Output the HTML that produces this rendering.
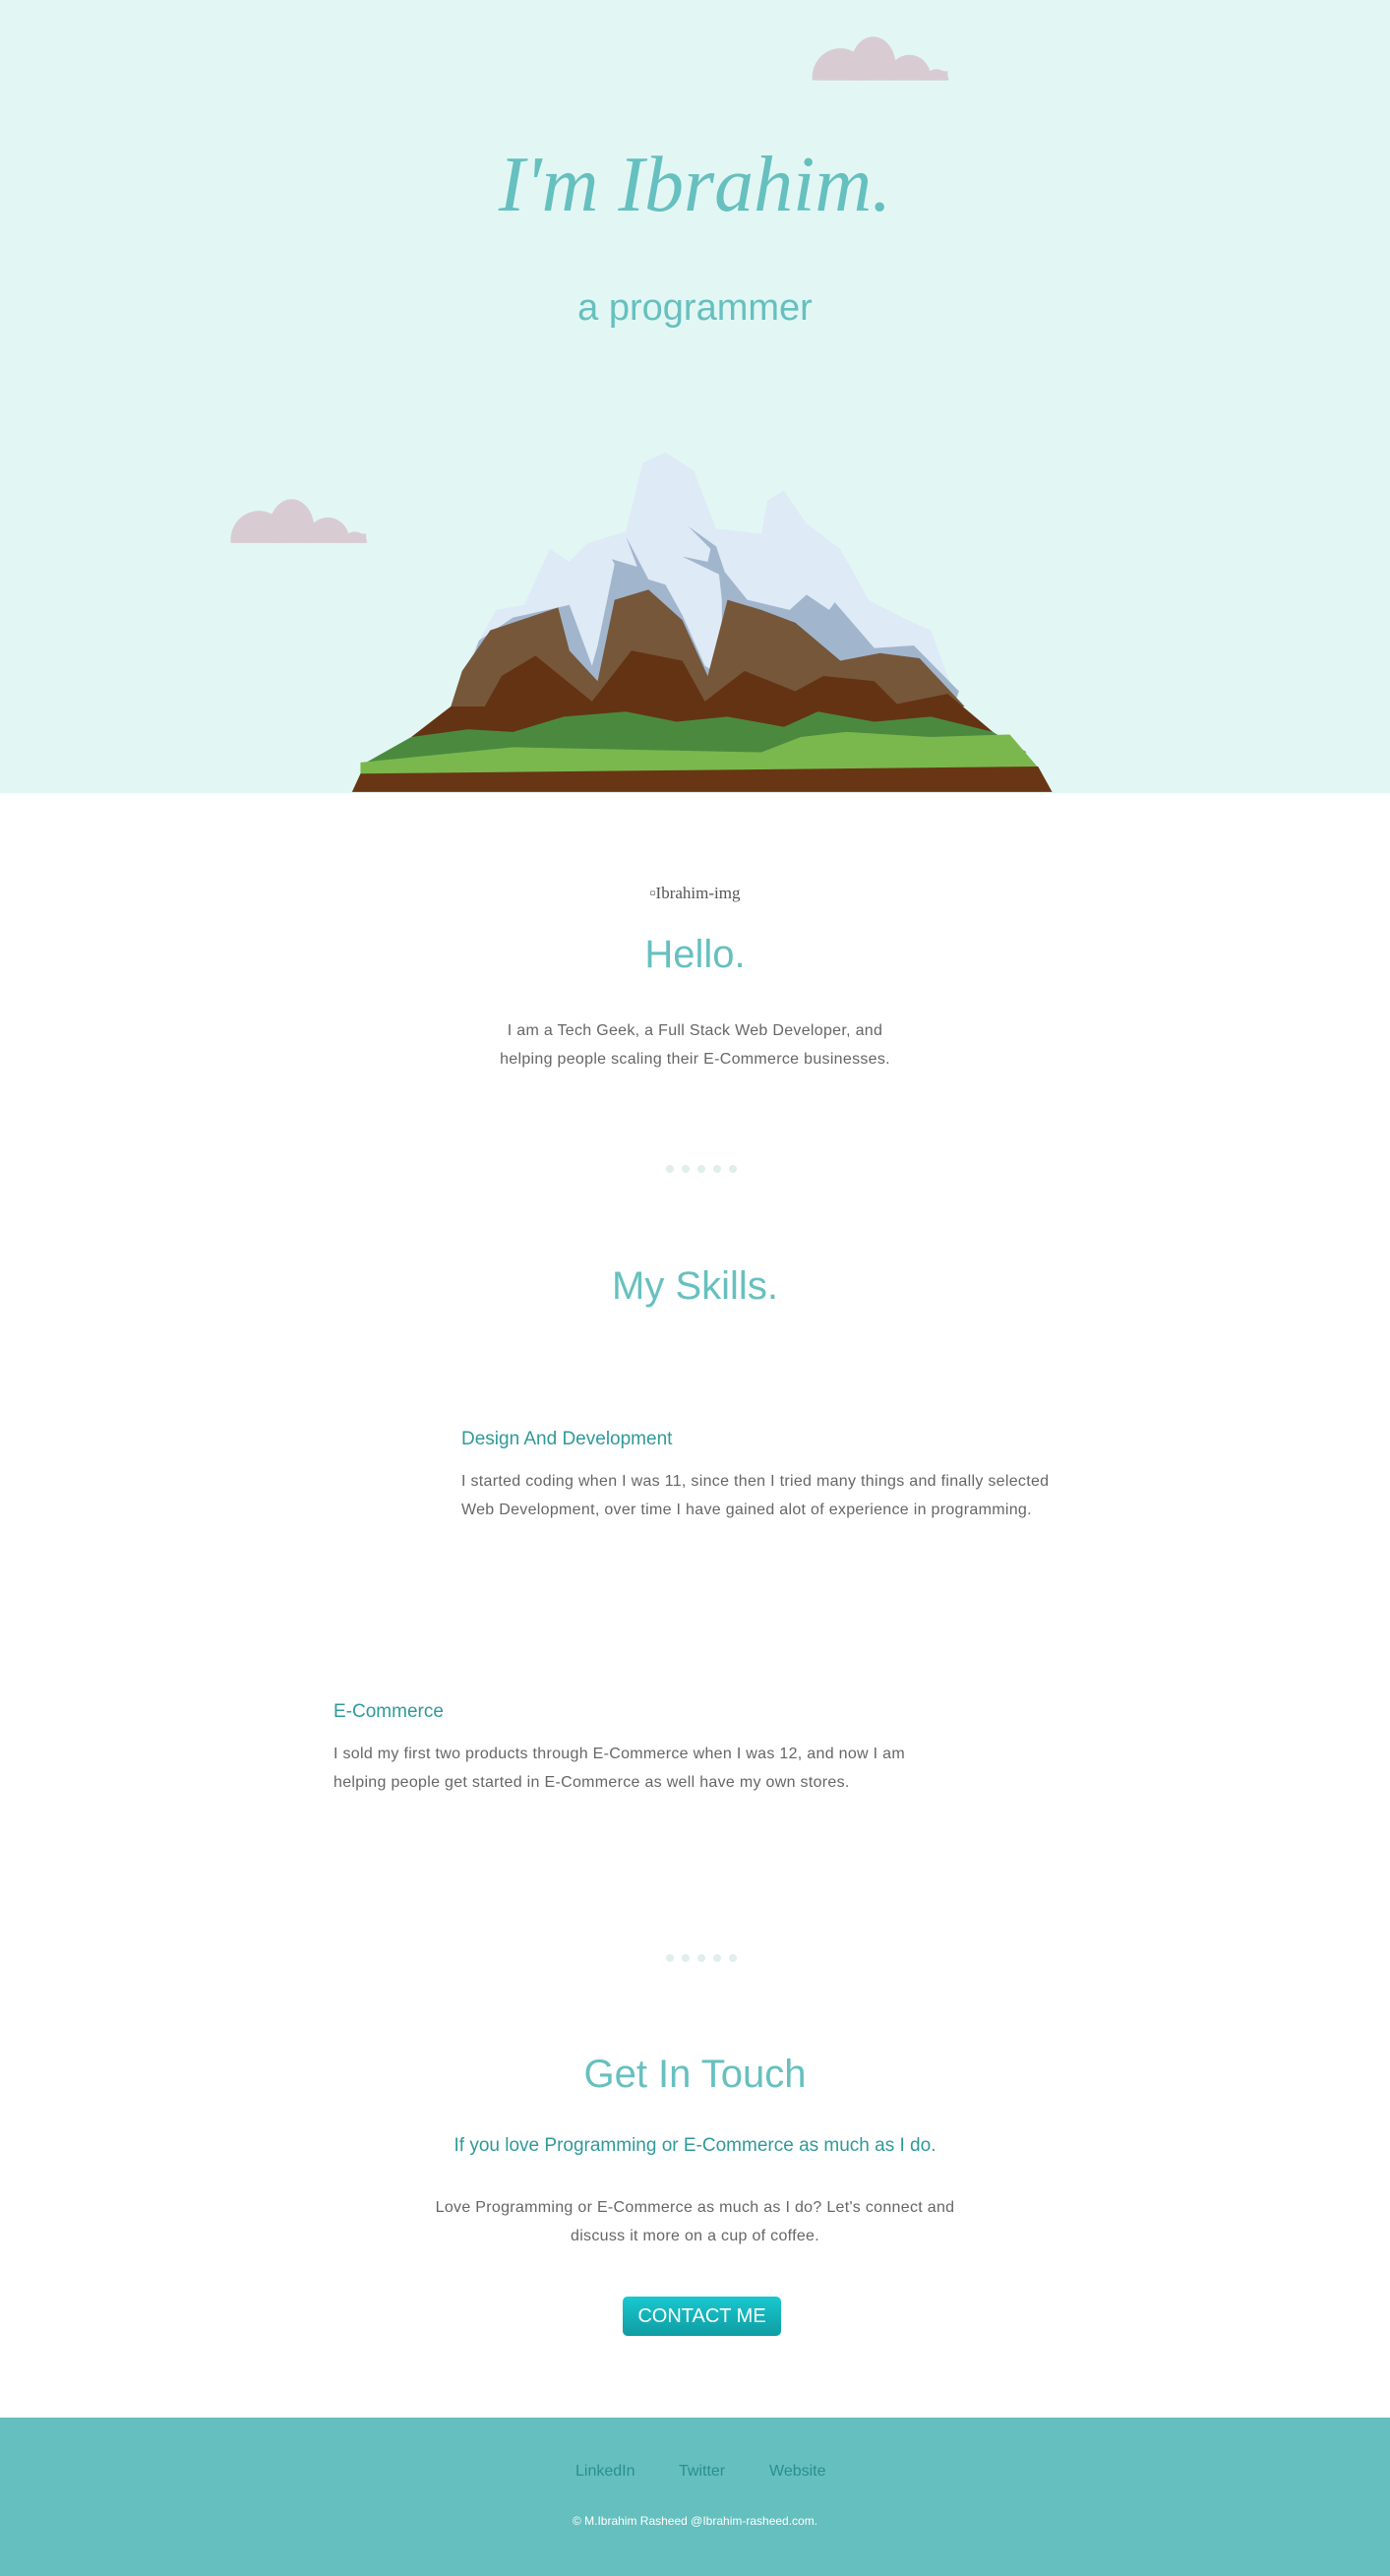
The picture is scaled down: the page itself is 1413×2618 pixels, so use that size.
<!DOCTYPE html>
<html><head><meta charset="utf-8"><style>
*{margin:0;padding:0;box-sizing:border-box}
body{width:1413px;height:2618px;position:relative;background:#fff;font-family:"Liberation Sans",sans-serif;overflow:hidden}
.a{position:absolute;white-space:nowrap}
.c{left:0;width:1413px;text-align:center}
.teal{color:#66c0bf}
.p{font-size:16px;color:#666;line-height:29px;letter-spacing:0.3px}
.h{font-size:40px;color:#66c0bf;line-height:48px}
.sh{font-size:19px;color:#2f9a99;line-height:24px}
.dots{left:677px;display:flex;gap:8px}
.dots i{width:8px;height:8px;border-radius:50%;background:#e0eeee;display:block}
</style></head><body>
<div class="a" style="left:0;top:0;width:1413px;height:806px;background:#e2f7f4"></div>
<svg class="a" style="left:200px;top:0" width="900" height="810" viewBox="0 0 1568 1568" preserveAspectRatio="none">
<defs><clipPath id="c1"><rect x="0" y="0" width="1568" height="158"/></clipPath><clipPath id="c2"><rect x="0" y="0" width="1568" height="1068"/></clipPath></defs>
<g fill="#d8ccd2" clip-path="url(#c1)">
<ellipse cx="1140" cy="152" rx="50" ry="57"/><ellipse cx="1198" cy="130" rx="40" ry="58"/><ellipse cx="1262" cy="152" rx="38" ry="44"/><ellipse cx="1310" cy="160" rx="22" ry="24"/><rect x="1100" y="140" width="230" height="20"/>
</g>
<g fill="#d8ccd2" clip-path="url(#c2)">
<ellipse cx="110" cy="1062" rx="50" ry="57"/><ellipse cx="168" cy="1040" rx="40" ry="58"/><ellipse cx="232" cy="1062" rx="38" ry="44"/><ellipse cx="280" cy="1070" rx="22" ry="24"/><rect x="65" y="1050" width="235" height="20"/>
</g>
<polygon fill="#dfeaf7" points="450,1390 490,1280 530,1200 580,1190 625,1080 660,1105 690,1070 760,1045 790,910 830,890 880,925 920,1040 1000,1050 1010,985 1040,965 1080,1030 1140,1080 1190,1180 1250,1215 1300,1240 1330,1330 1350,1390"/>
<polygon fill="#a1b6cd" points="460,1380 500,1260 560,1215 660,1190 700,1310 710,1270 740,1110 735,1100 780,1115 760,1055 800,1140 830,1150 860,1210 900,1310 930,1330 930,1180 925,1130 860,1095 905,1105 910,1080 870,1035 920,1075 935,1125 975,1180 1050,1200 1080,1170 1120,1200 1130,1185 1200,1275 1270,1270 1350,1360 1340,1390"/>
<polygon fill="#76573a" points="450,1390 470,1320 520,1240 640,1195 660,1280 710,1340 740,1180 800,1160 860,1220 905,1330 940,1180 1000,1200 1060,1225 1140,1300 1210,1285 1280,1295 1360,1390"/>
<polygon fill="#643314" points="380,1450 450,1390 510,1390 540,1330 600,1290 700,1380 770,1280 860,1300 900,1380 970,1320 1060,1360 1110,1330 1200,1340 1240,1385 1330,1365 1410,1440 1440,1470 380,1470"/>
<polygon fill="#4b8a3e" points="300,1500 380,1450 480,1435 560,1440 650,1410 760,1400 850,1420 940,1410 1040,1430 1100,1400 1200,1420 1300,1410 1410,1440 1470,1480 300,1510"/>
<polygon fill="#7ab84e" points="290,1500 560,1470 1000,1480 1070,1450 1150,1440 1300,1450 1440,1445 1490,1510 290,1525"/>
<polygon fill="#683614" points="290,1522 1490,1508 1515,1558 275,1558"/>
</svg>
<div class="a c" style="top:140px;font-family:'Liberation Serif',serif;font-style:italic;font-size:80px;line-height:96px;color:#66c0bf">I'm Ibrahim.</div>
<div class="a c teal" style="top:290px;font-size:38px;line-height:46px">a programmer</div>
<div class="a c" style="top:897px;font-family:'Liberation Serif',serif;font-size:17px;color:#555;line-height:22px">▫Ibrahim-img</div>
<div class="a c h" style="top:946px">Hello.</div>
<div class="a c p" style="top:1033px">I am a Tech Geek, a Full Stack Web Developer, and<br>helping people scaling their E-Commerce businesses.</div>
<div class="a dots" style="top:1184px"><i></i><i></i><i></i><i></i><i></i></div>
<div class="a c h" style="top:1283px">My Skills.</div>
<div class="a sh" style="left:469px;top:1451px">Design And Development</div>
<div class="a p" style="left:469px;top:1491px">I started coding when I was 11, since then I tried many things and finally selected<br>Web Development, over time I have gained alot of experience in programming.</div>
<div class="a sh" style="left:339px;top:1728px">E-Commerce</div>
<div class="a p" style="left:339px;top:1768px">I sold my first two products through E-Commerce when I was 12, and now I am<br>helping people get started in E-Commerce as well have my own stores.</div>
<div class="a dots" style="top:1986px"><i></i><i></i><i></i><i></i><i></i></div>
<div class="a c h" style="top:2084px">Get In Touch</div>
<div class="a c sh" style="top:2169px">If you love Programming or E-Commerce as much as I do.</div>
<div class="a c p" style="top:2229px">Love Programming or E-Commerce as much as I do? Let's connect and<br>discuss it more on a cup of coffee.</div>
<div class="a" style="left:633px;top:2334px;width:161px;height:40px;border-radius:5px;background:linear-gradient(#18c9cf,#0f9ca3);color:#fff;font-size:20px;line-height:40px;text-align:center">CONTACT ME</div>
<div class="a" style="left:0;top:2457px;width:1413px;height:161px;background:#65bfbe"></div>
<div class="a" style="left:585px;top:2503px;font-size:16px;color:#2a8f90">LinkedIn</div>
<div class="a" style="left:690px;top:2503px;font-size:16px;color:#2a8f90">Twitter</div>
<div class="a" style="left:782px;top:2503px;font-size:16px;color:#2a8f90">Website</div>
<div class="a c" style="top:2555px;font-size:12px;color:#fff">© M.Ibrahim Rasheed @Ibrahim-rasheed.com.</div>
</body></html>
